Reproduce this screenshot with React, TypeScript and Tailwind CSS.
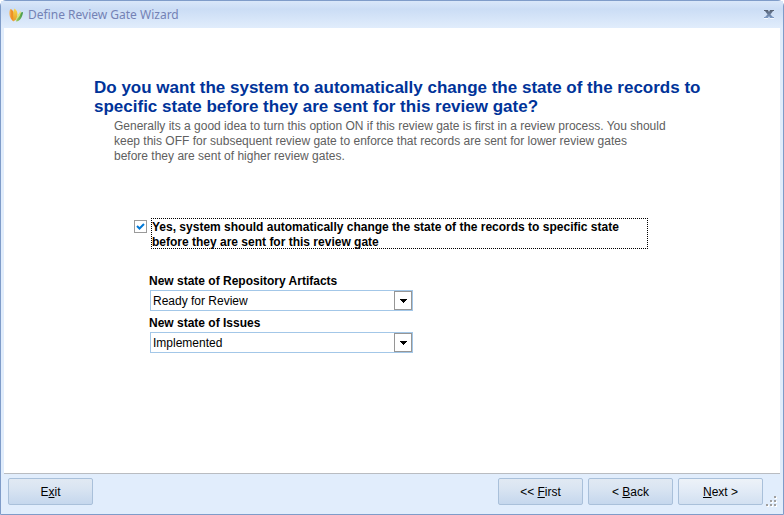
import type { ReactNode } from "react";

const WizardButton = ({
  children,
  active = false,
}: {
  children: ReactNode;
  active?: boolean;
}) => {
  return (
    <button
      type="button"
      className={
        active
          ? "h-[27px] w-[85px] rounded-xs border border-[#a9c0da] bg-linear-to-b from-[#edf2f8] from-0% via-[#e5edf7] via-35% to-[#d2e0f1] to-100% text-center text-xs"
          : "h-[27px] w-[85px] rounded-xs border border-[#a9c0da] bg-linear-to-b from-[#e1e9f3] from-0% via-[#dae5f2] via-35% to-[#c5d7ed] to-100% text-center text-xs"
      }
    >
      {children}
    </button>
  );
};

const StateSelect = ({
  id,
  label,
  options,
}: {
  id: string;
  label: string;
  options: string[];
}) => {
  return (
    <div>
      <label htmlFor={id} className="block text-xs leading-[14px] font-bold">
        {label}
      </label>
      <div className="relative ml-px mt-[2px] h-[21px] w-[263px] border border-[#a3c7e8] bg-white">
        <select
          id={id}
          className="block h-full w-full appearance-none bg-transparent pl-[2px] text-xs outline-none"
        >
          {options.map((option) => (
            <option key={option}>{option}</option>
          ))}
        </select>
        <span className="pointer-events-none absolute inset-y-0 right-0 flex w-[18px] items-center justify-center border border-[#969696] bg-white">
          <svg width="7" height="4" shapeRendering="crispEdges">
            <path d="M0 0h7v1H6v1H5v1H4v1H3V3H2V2H1V1H0z" />
          </svg>
        </span>
      </div>
    </div>
  );
};

const TitleBar = () => {
  return (
    <header className="flex h-[27px] items-center bg-linear-to-b from-[#d9e7f9] from-0% via-[#cbddf5] via-30% to-[#e1edfc] to-100% pr-[6px] pl-[7px]">
      <svg width="16" height="16" viewBox="0 0 16 16">
        <defs>
          <linearGradient id="leafOrange">
            <stop offset="0" stopColor="#f6bd6c" />
            <stop offset="0.5" stopColor="#ec8a1c" />
            <stop offset="1" stopColor="#f5a93a" />
          </linearGradient>
          <linearGradient id="leafYellow" x2="0" y2="1">
            <stop offset="0" stopColor="#fbd64c" />
            <stop offset="1" stopColor="#e3a02a" />
          </linearGradient>
          <linearGradient id="leafGreen">
            <stop offset="0" stopColor="#a5cf5e" />
            <stop offset="1" stopColor="#3a9446" />
          </linearGradient>
        </defs>
        <path
          d="M2.500 2C.500 4 .500 11 5.500 14.500 7.500 12 7 3.500 2.500 2z"
          fill="url(#leafOrange)"
        />
        <path
          d="M6.500 1.500C4.500 5 5 11 6.500 14 10.500 11 10.500 4 6.500 1.500z"
          fill="url(#leafYellow)"
        />
        <path
          d="M15 5C12 5.500 9 8.500 8 14.500 12.500 14 14.500 9.500 15 5z"
          fill="url(#leafGreen)"
        />
        <path d="M13 4C10.500 6 9 9 8 13 11 10.500 13 7.500 13 4z" fill="#dbe37a" />
      </svg>
      <h1 className="ml-1 grow font-['Noto_Sans',sans-serif] text-xs text-[#7482b5]">
        Define Review Gate Wizard
      </h1>
      <button type="button" aria-label="Close" className="flex h-4 w-4 items-center justify-center">
        <svg width="10" height="9" viewBox="0 0 10 9">
          <defs>
            <linearGradient id="closeFill" x2="0" y2="1">
              <stop offset="0" stopColor="#56606f" />
              <stop offset="1" stopColor="#7d9cc8" />
            </linearGradient>
          </defs>
          <path
            d="M0 0h4l1 2 1-2h4v1H9L6.500 4.500 9 7h1v1H6L5 6 4 8H0V7h1l2.500-2.500L1 1H0z"
            fill="url(#closeFill)"
          />
          <path d="M0 8h4v1H0zM6 8h4v1H6z" fill="#f4f8fd" />
        </svg>
      </button>
    </header>
  );
};

export default function App() {
  return (
    <div className="bg-white font-['Liberation_Sans',Arial,sans-serif] text-black">
      <div className="flex min-h-screen flex-col rounded-t-md border border-[#7f9cc9] bg-[#e1edfc]">
        <TitleBar />
        <main className="mx-[3px] grow border-b border-[#b9bcc1] bg-white pt-[50px] pr-10 pl-[90px]">
          <h2 className="text-[17px] leading-[19px] font-bold text-[#003399]">
            Do you want the system to automatically change the state of the records to
            <br />
            specific state before they are sent for this review gate?
          </h2>
          <p className="mt-[3px] ml-5 text-xs leading-[15px] text-[#606060]">
            Generally its a good idea to turn this option ON if this review gate is first in a review
            process. You should
            <br />
            keep this OFF for subsequent review gate to enforce that records are sent for lower review
            gates
            <br />
            before they are sent of higher review gates.
          </p>
          <div className="mt-[54px] ml-10 flex items-start">
            <span className="relative mt-[2px] h-[13px] w-[13px]">
              <input
                id="auto-change"
                type="checkbox"
                defaultChecked
                className="peer block h-[13px] w-[13px] appearance-none border border-[#9a9a9a] bg-white"
              />
              <svg
                width="13"
                height="13"
                viewBox="0 0 13 13"
                className="pointer-events-none absolute inset-0 hidden peer-checked:block"
              >
                <path d="M3 6l2.500 2.500L10 4" fill="none" stroke="#0078d7" strokeWidth="2" />
              </svg>
            </span>
            <label
              htmlFor="auto-change"
              className="ml-1 h-[31px] w-[497px] border border-dotted border-black pt-px text-xs leading-[15px] font-bold"
            >
              Yes, system should automatically change the state of the records to specific state
              <br />
              before they are sent for this review gate
            </label>
          </div>
          <div className="mt-[25px] ml-[55px] flex flex-col gap-[5px]">
            <StateSelect
              id="artifact-state"
              label="New state of Repository Artifacts"
              options={["Ready for Review"]}
            />
            <StateSelect id="issue-state" label="New state of Issues" options={["Implemented"]} />
          </div>
        </main>
        <footer className="flex px-[7px] pt-1 pb-[9px]">
          <WizardButton>
            E<u>x</u>it
          </WizardButton>
          <div className="ml-auto flex items-end gap-[5px]">
            <WizardButton>
              &lt;&lt; <u>F</u>irst
            </WizardButton>
            <WizardButton>
              &lt; <u>B</u>ack
            </WizardButton>
            <WizardButton active>
              <u>N</u>ext &gt;
            </WizardButton>
          </div>
          <svg
            width="12"
            height="12"
            className="-mr-[2px] -mb-[3px] ml-[3px] self-end"
            shapeRendering="crispEdges"
          >
            <path d="M9 1h2v2H9zM5 5h2v2H5zM9 5h2v2H9zM1 9h2v2H1zM5 9h2v2H5zM9 9h2v2H9z" fill="#fff" />
            <path d="M8 0h2v2H8zM4 4h2v2H4zM8 4h2v2H8zM0 8h2v2H0zM4 8h2v2H4zM8 8h2v2H8z" fill="#a0a0a0" />
          </svg>
        </footer>
      </div>
    </div>
  );
}
